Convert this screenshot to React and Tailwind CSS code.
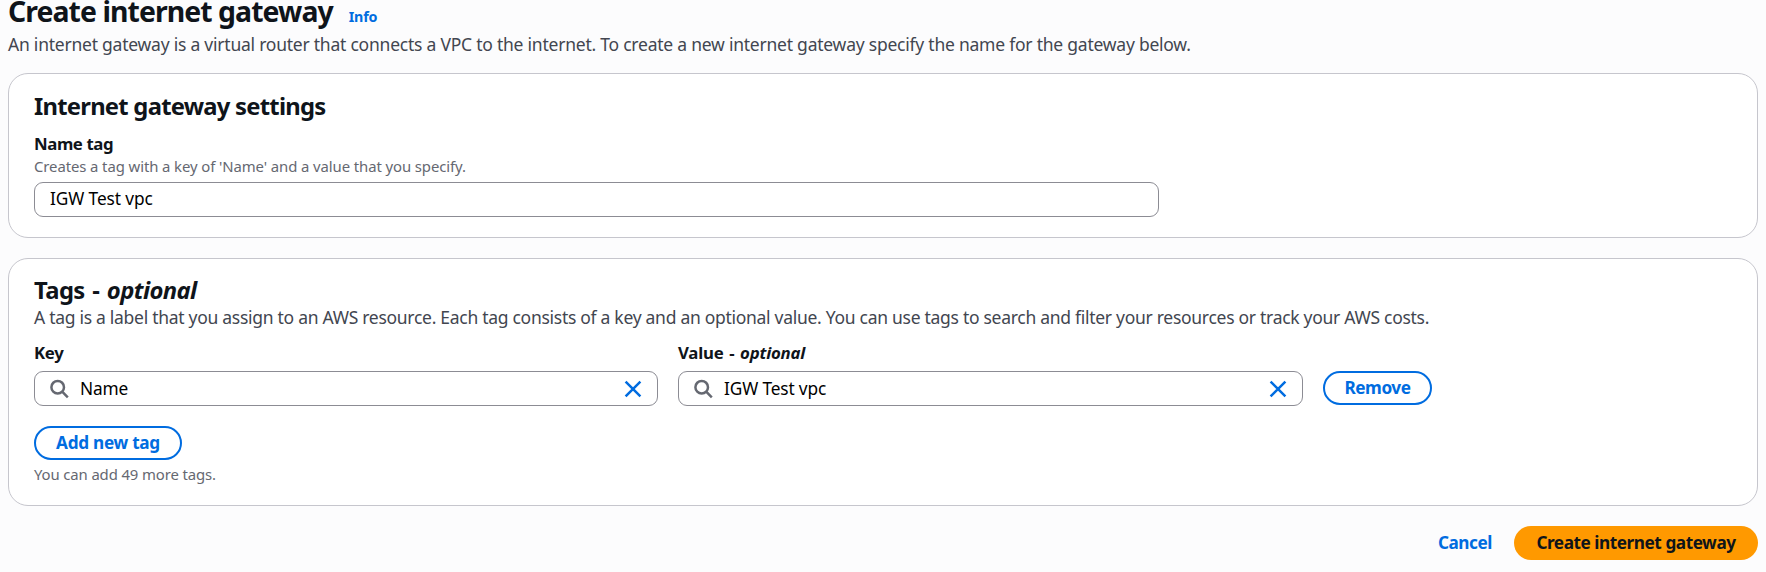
const FONT = "font-['Noto_Sans','Open_Sans',sans-serif]";

function SearchIcon() {
  return (
    <svg className="h-5 w-5 shrink-0" viewBox="0 0 20 20" fill="none" stroke="#656871" strokeWidth="2.5">
      <circle cx="7.7" cy="8.2" r="6.3" />
      <path d="M12.2 12.7 L17.8 18.3" />
    </svg>
  );
}

function ClearIcon() {
  return (
    <svg className="h-5 w-5 shrink-0" viewBox="0 0 20 20" fill="none" stroke="#006ce0" strokeWidth="2.5">
      <path d="M2.6 2.6 L17.4 17.4 M17.4 2.6 L2.6 17.4" />
    </svg>
  );
}

function SearchField({ label, value }) {
  return (
    <div className="flex flex-col">
      <div className="mb-[6px] h-6 whitespace-nowrap text-[16.8px] font-bold leading-6 tracking-[-0.3px]">{label}</div>
      <div className="flex h-[35px] items-center rounded-[9px] border border-[#8c8c94] bg-white pl-[15px] pr-[14px]">
        <SearchIcon />
        <span className="ml-[10px] flex-1 text-[17.3px] leading-6 tracking-[-0.15px] text-black">{value}</span>
        <ClearIcon />
      </div>
    </div>
  );
}

export default function App() {
  return (
    <main className={`${FONT} h-[572px] overflow-hidden bg-[#fcfcfd] px-2 text-[#0f141a]`}>
      <header className="flex h-[73px] flex-col">
        <div className="-mt-[3px] flex h-[35px] items-baseline whitespace-nowrap">
          <h1 className="text-[28.4px] font-bold leading-[28px] tracking-[-0.93px]">Create internet gateway</h1>
          <a className="ml-[16px] text-[14.3px] font-bold leading-5 tracking-[-0.2px] text-[#006ce0]">Info</a>
        </div>
        <p className="whitespace-nowrap text-[17.5px] leading-6 tracking-[-0.231px] text-[#424650]">
          An internet gateway is a virtual router that connects a VPC to the internet. To create a new internet gateway specify the name for the gateway below.
        </p>
      </header>

      <section className="h-[165px] rounded-[20px] border border-[#c6c6cd] bg-white px-[25px] pt-[16px]">
        <h2 className="h-8 text-[23.8px] font-bold leading-8 tracking-[-0.75px]">Internet gateway settings</h2>
        <div className="mt-[10px] h-6 text-[16.8px] font-bold leading-6 tracking-[-0.4px]">Name tag</div>
        <div className="h-5 text-[14.9px] leading-5 tracking-[-0.09px] text-[#656871]">Creates a tag with a key of 'Name' and a value that you specify.</div>
        <div className="mt-[6px] flex h-[35px] w-[1125px] items-center rounded-[9px] border border-[#8c8c94] pb-[2px] pl-[15px] text-[17.3px] leading-6 tracking-[-0.1px] text-black">IGW Test vpc</div>
      </section>

      <section className="mt-5 h-[248px] rounded-[20px] border border-[#c6c6cd] bg-white px-[25px] pt-[15px]">
        <h2 className="h-8 text-[23.8px] font-bold leading-8 tracking-[-0.6px] [word-spacing:2px]">
          Tags - <i>optional</i>
        </h2>
        <p className="-mt-px whitespace-nowrap text-[17.5px] leading-6 tracking-[-0.285px] text-[#424650]">
          A tag is a label that you assign to an AWS resource. Each tag consists of a key and an optional value. You can use tags to search and filter your resources or track your AWS costs.
        </p>
        <div className="mt-[12px] grid grid-cols-[624px_625px_109px] items-end gap-5">
          <SearchField label="Key" value="Name" />
          <SearchField label={<span className="tracking-[-0.2px] [word-spacing:1.5px]">Value - <i>optional</i></span>} value="IGW Test vpc" />
          <button className="mb-[1px] h-[34px] rounded-full border-2 border-[#006ce0] pb-px text-[17.2px] font-bold tracking-[-0.45px] text-[#006ce0]">Remove</button>
        </div>
        <button className="mt-5 flex h-[34px] w-[148px] items-center justify-center rounded-full border-2 border-[#006ce0] text-[17.2px] font-bold tracking-[-0.28px] text-[#006ce0]">Add new tag</button>
        <div className="mt-[4px] text-[14.9px] leading-5 tracking-[-0.12px] text-[#656871]">You can add 49 more tags.</div>
      </section>

      <footer className="mt-5 flex items-center justify-end">
        <button className="mr-[22px] text-[17.2px] font-bold tracking-[-0.45px] text-[#006ce0]">Cancel</button>
        <button className="h-[34px] w-[244px] rounded-full bg-[#ff9900] text-[17.2px] font-bold tracking-[-0.45px]">Create internet gateway</button>
      </footer>
    </main>
  );
}
